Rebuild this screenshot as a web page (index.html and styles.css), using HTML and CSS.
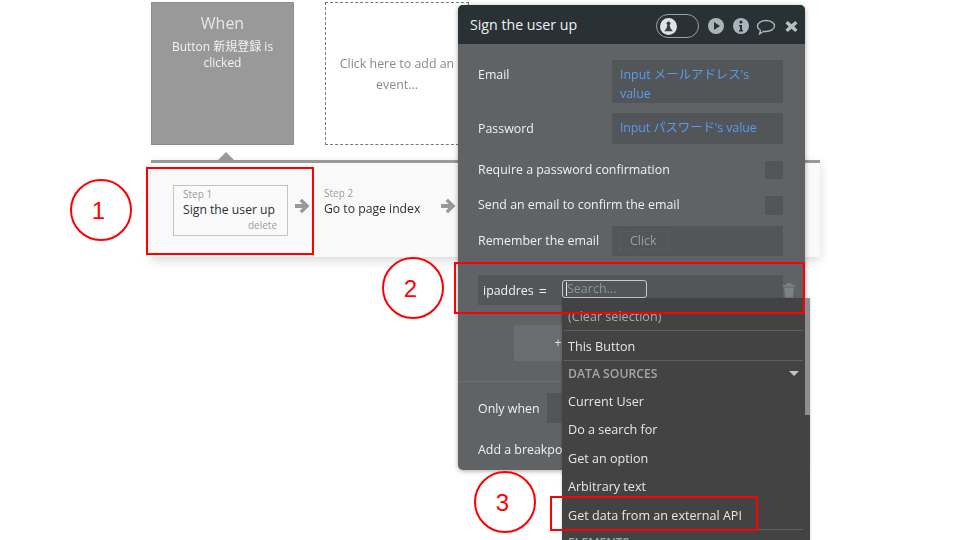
FILE: index.html
```html
<!DOCTYPE html>
<html lang="en">
<head>
<meta charset="utf-8">
<title>Sign the user up</title>
<link rel="stylesheet" href="styles.css">
</head>
<body>
<main class="stage">
  <section class="event-card event-when">
    <h2>When</h2>
    <p>Button 新規登録 is clicked</p>
  </section>
  <section class="event-card event-add"><p>Click here to add an event...</p></section>

  <section class="timeline">
    <div class="step step-active">
      <span class="step-no">Step 1</span>
      <span class="step-name">Sign the user up</span>
      <span class="step-del">delete</span>
    </div>
    <svg class="arrow" viewBox="0 0 16 16"><path d="M1 6h7.500L5.500 3 8 .8 15.500 8 8 15.200 5.500 13l3-3H1z"/></svg>
    <div class="step step-plain">
      <span class="step-no">Step 2</span>
      <span class="step-name">Go to page index</span>
    </div>
    <svg class="arrow" viewBox="0 0 16 16"><path d="M1 6h7.500L5.500 3 8 .8 15.500 8 8 15.200 5.500 13l3-3H1z"/></svg>
  </section>

  <section class="panel">
    <header class="panel-head">
      <h1>Sign the user up</h1>
      <div class="head-icons">
        <span class="toggle"><svg viewBox="0 0 16 16"><circle cx="8" cy="8" r="8" fill="#dfe3e6"/><circle cx="8" cy="5" r="1.800" fill="#3a3f42"/><path d="M7 6h2l.8 3.500 2.200 3H4l2.200-3z" fill="#3a3f42"/></svg></span>
        <svg class="ic" viewBox="0 0 16 16"><circle cx="8" cy="8" r="8" fill="#a9b4bb"/><path d="M6 4l6 4-6 4z" fill="#2a3135"/></svg>
        <svg class="ic" viewBox="0 0 16 16"><circle cx="8" cy="8" r="8" fill="#a9b4bb"/><circle cx="8" cy="4" r="1.600" fill="#2a3135"/><path d="M6 7h3v5h1v1.500H6V12h1V8.500H6z" fill="#2a3135"/></svg>
        <svg class="ic ic-chat" viewBox="0 0 20 16"><path d="M10 1.500c4.700 0 8.500 2.400 8.500 5.500S14.700 12.500 10 12.500c-.8 0-1.500-.1-2.200-.2L3.500 15l1-3.700C2.700 10.300 1.500 8.800 1.500 7 1.500 3.900 5.300 1.500 10 1.500z" fill="none" stroke="#a9b4bb" stroke-width="1.300"/></svg>
        <svg class="ic ic-close" viewBox="0 0 14 14"><path d="M3 1l4 3.500L11 1l2.500 2.500L10 7l3.500 3.500L11 13 7 9.500 3 13 .5 10.500 4 7 .5 3.500z" fill="#b5bec4"/></svg>
      </div>
    </header>
    <div class="panel-body">
      <div class="row row-email">
        <label>Email</label>
        <div class="field link">Input メールアドレス's value</div>
      </div>
      <div class="row row-pass">
        <label>Password</label>
        <div class="field link">Input パスワード's value</div>
      </div>
      <div class="row row-check1">
        <label>Require a password confirmation</label>
        <span class="check"></span>
      </div>
      <div class="row row-check2">
        <label>Send an email to confirm the email</label>
        <span class="check"></span>
      </div>
      <div class="row row-remember">
        <label>Remember the email</label>
        <div class="field"><span class="click">Click</span></div>
      </div>
      <div class="param">
        <span>ipaddres</span><span class="eq">=</span>
      </div>
      <div class="add-btn">+</div>
      <hr class="rule">
      <div class="row row-only">
        <label>Only when</label>
        <div class="only-field"></div>
      </div>
      <div class="breakpoint">Add a breakpoint</div>
    </div>
  </section>

  <svg class="trash" viewBox="0 0 14 16"><path d="M1 3h12v1.500H1zM5 1h4l.8 2H4.200zM2.200 5.500h9.600L11 15.500H3z" fill="#7c8184"/></svg>

  <div class="search"><i class="caret"></i>Search...</div>

  <section class="dropdown">
    <div class="dd-item dd-clear">(Clear selection)</div>
    <div class="dd-item dd-line">This Button</div>
    <div class="dd-head"><span>DATA SOURCES</span><i class="tri"></i></div>
    <div class="dd-item">Current User</div>
    <div class="dd-item">Do a search for</div>
    <div class="dd-item">Get an option</div>
    <div class="dd-item">Arbitrary text</div>
    <div class="dd-item">Get data from an external API</div>
    <div class="dd-head dd-head-next"><span>ELEMENTS</span><i class="tri"></i></div>
  </section>
  <div class="scroll"></div>

  <div class="mark rect1"></div>
  <div class="mark rect2"></div>
  <div class="mark rect3"></div>
  <div class="num num1">1</div>
  <div class="num num2">2</div>
  <div class="num num3">3</div>
</main>
</body>
</html>
```
FILE: styles.css
```css
* { box-sizing: border-box; }
html, body { margin: 0; padding: 0; background: #fff; }
body { font-family: "Open Sans", "Noto Sans CJK JP", sans-serif; }

.stage {
  position: relative;
  width: 960px;
  height: 540px;
  overflow: hidden;
  background: #fff;
}

.event-card, .timeline, .panel, .dropdown, .search, .trash, .scroll { filter: blur(.35px); }

.event-card {
  position: absolute;
  top: 2px;
  width: 143px;
  height: 143px;
  text-align: center;
}
.event-when {
  left: 151px;
  background: #999;
  border: 1px solid #8d8d8d;
  color: #f2f2f2;
  padding: 10px 10px 0;
}
.event-when h2 {
  margin: 0;
  font-size: 16px;
  line-height: 21px;
  font-weight: 400;
  color: #e6e6e6;
}
.event-when p {
  margin: 5px 0 0;
  font-size: 12px;
  line-height: 16px;
}
.event-add {
  left: 325px;
  width: 144px;
  border: 1px dashed #777;
  color: #8a8a8a;
  font-size: 12.400px;
  line-height: 21px;
  display: flex;
  align-items: center;
  justify-content: center;
  padding: 0 8px;
}
.event-add p { margin: 0; }

.timeline {
  position: absolute;
  left: 151px;
  top: 160px;
  width: 669px;
  height: 97px;
  background: #f9f9f9;
  border-top: 3px solid #999;
  box-shadow: 0 4px 10px rgba(0,0,0,.14);
  display: flex;
  align-items: flex-start;
  padding: 22px 0 0 22px;
}
.timeline::before {
  content: "";
  position: absolute;
  left: 67px;
  top: -11px;
  border: 8px solid transparent;
  border-top-width: 0;
  border-bottom-color: #999;
}
.step {
  display: flex;
  flex-direction: column;
  width: 115px;
  height: 51px;
  padding: 2px 10px 0 9px;
  color: #333;
}
.step-active {
  border: 1px solid #bcc6cc;
  background: #fafafa;
}
.step-plain { padding-left: 0; width: 110px; }
.step-no { font-size: 10px; line-height: 13px; color: #9a9a9a; }
.step-name { font-size: 12.200px; line-height: 18px; white-space: nowrap; color: #2f2f2f; }
.step-del { font-size: 10px; line-height: 13px; color: #a0a0a0; text-align: right; }
.arrow { width: 16px; height: 16px; margin: 13px 14px 0 6px; fill: #999; flex: none; }

.panel {
  position: absolute;
  left: 458px;
  top: 5px;
  width: 347px;
  height: 465px;
  border-radius: 5px;
  overflow: hidden;
  background: #5f6366;
  box-shadow: 0 1px 5px rgba(0,0,0,.35);
  color: #f0f0f0;
  font-size: 12.400px;
}
.panel-head {
  height: 39px;
  background: #2a3135;
  display: flex;
  align-items: center;
  justify-content: space-between;
  padding: 0 7px 0 12px;
}
.panel-head h1 {
  margin: 0;
  font-size: 14.200px;
  font-weight: 400;
  color: #eef0f0;
}
.head-icons { display: flex; align-items: center; padding-top: 3px; }
.toggle {
  display: flex;
  align-items: center;
  width: 43px;
  height: 24px;
  margin-right: 9px;
  border: 1px solid #99a1a5;
  border-radius: 12px;
  padding-left: 3px;
}
.toggle svg { width: 17px; height: 17px; }
.ic { width: 16px; height: 16px; margin-right: 9px; }
.ic + .ic-chat { margin-left: -2px; }
.ic-chat { width: 20px; height: 16px; margin-top: 2px; }
.ic-close { width: 13px; height: 13px; margin-right: 0; }

.panel-body { padding: 16px 22px 0 20px; }
.row { display: flex; justify-content: space-between; align-items: center; }
.row label { white-space: nowrap; }
.field {
  width: 171px;
  background: #525659;
  padding: 5px 8px;
  line-height: 18.500px;
}
.link { color: #5b9bef; }
.row-email { align-items: flex-start; height: 43px; }
.row-email label { padding-top: 6px; line-height: 18px; }
.field.link { padding: 6px 8px; }
.row-email .field { height: 43px; padding: 6px 8px 0; }
.row-pass { margin-top: 10px; height: 31px; }
.row-pass .field { height: 31px; padding: 6px 8px; white-space: nowrap; letter-spacing: -.1px; }
.row-check1 { margin-top: 17px; height: 18px; }
.row-check2 { margin-top: 17px; height: 19px; }
.row-check1 label, .row-check2 label, .row-remember label { padding-bottom: 2px; }
.check { width: 18px; height: 100%; background: #525659; }
.row-remember { margin-top: 11px; height: 30px; }
.row-remember .field { height: 30px; padding: 6px 0 0 8px; }
.click {
  display: inline-block;
  color: #9a9ea0;
  padding: 0 10px;
  line-height: 17px;
  outline: 1px dashed #5a5e61;
}
.param {
  margin-top: 19px;
  height: 30px;
  background: #525659;
  display: flex;
  align-items: center;
  padding-left: 5px;
  gap: 5px;
}
.eq { font-size: 14px; }
.add-btn {
  margin: 20px 0 0 36px;
  width: 88px;
  height: 36px;
  background: #6a6e71;
  color: #ddd;
  border-radius: 2px;
  text-align: center;
  line-height: 36px;
}
.rule {
  margin: 20px -22px 0 -20px;
  border: 0;
  border-top: 1px solid #6c7073;
}
.row-only { margin-top: 11px; justify-content: flex-start; gap: 7px; height: 30px; }
.only-field { width: 120px; height: 30px; background: #525659; }
.breakpoint { margin-top: 18px; line-height: 18px; white-space: nowrap; }

.trash { position: absolute; left: 782px; top: 282px; width: 14px; height: 16px; }

.search {
  position: absolute;
  left: 562px;
  top: 280px;
  width: 85px;
  height: 18px;
  border: 1px solid #c4c8ca;
  border-radius: 3px;
  color: #8f9497;
  font-size: 12.500px;
  line-height: 16px;
  padding-left: 4px;
}
.caret {
  position: absolute;
  left: 3px;
  top: 1px;
  width: 1px;
  height: 14px;
  background: #e8e8e8;
}

.dropdown {
  position: absolute;
  left: 562px;
  top: 298px;
  width: 248px;
  height: 242px;
  background: #434343;
  color: #e6e6e6;
  font-size: 12.600px;
  padding: 0 7px 0 2px;
  overflow: hidden;
  box-shadow: 0 1px 3px rgba(0,0,0,.2);
}
.dd-item {
  height: 28.4px;
  line-height: 28px;
  padding-left: 4px;
  white-space: nowrap;
}
.dd-clear {
  height: 33px;
  line-height: 37px;
  color: #a9a9a9;
  border-bottom: 1px solid #5f5f5f;
}
.dd-line { height: 30px; line-height: 31px; border-bottom: 1px solid #5f5f5f; }
.dd-head {
  display: flex;
  justify-content: space-between;
  align-items: center;
  height: 27px;
  padding: 0 4px 2px 4px;
  color: #a6a6a6;
  font-weight: 600;
  font-size: 12.200px;
}
.dd-head-next { margin-top: -1px; border-top: 1px solid #5f5f5f; height: 24px; padding: 2px 4px 0; }
.tri {
  width: 0;
  height: 0;
  border: 5px solid transparent;
  border-top: 5px solid #c4c4c4;
  border-bottom-width: 0;
}
.scroll {
  position: absolute;
  left: 805px;
  top: 298px;
  width: 5px;
  height: 117px;
  background: #8c8f91;
}

.mark { position: absolute; border: 2px solid #f00; }
.rect1 { left: 146px; top: 167px; width: 168px; height: 88px; }
.rect2 { left: 454px; top: 262px; width: 351px; height: 52px; }
.rect3 { left: 550px; top: 496px; width: 208px; height: 35px; }

.num {
  position: absolute;
  width: 62px;
  height: 62px;
  border: 2px solid #f00;
  border-radius: 50%;
  background: #fff;
  color: #f00;
  font-family: "Liberation Sans", sans-serif;
  font-size: 24px;
  line-height: 60px;
  text-align: center;
  padding-right: 5px;
}
.num1 { left: 70px; top: 179px; }
.num2 { left: 382px; top: 257px; }
.num3 { left: 474px; top: 471px; }
```
